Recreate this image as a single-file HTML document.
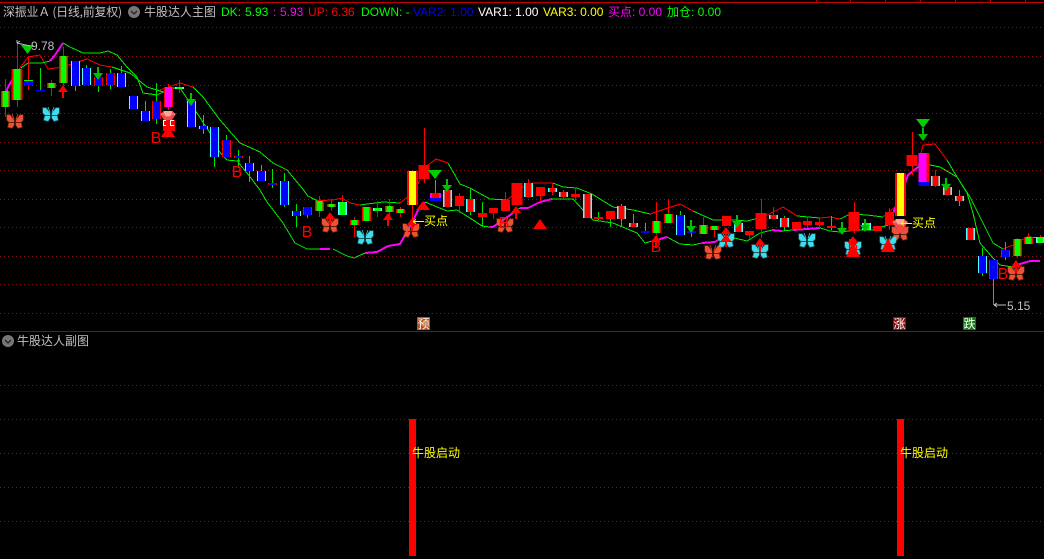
<!DOCTYPE html>
<html><head><meta charset="utf-8"><style>
html,body{margin:0;padding:0;background:#000;width:1044px;height:559px;overflow:hidden}
svg{position:absolute;left:0;top:0}
text{font-family:"Liberation Sans","WenQuanYi Zen Hei","Noto Sans CJK SC",sans-serif;font-size:12px}
.t{font-family:"WenQuanYi Zen Hei","Noto Sans CJK SC",sans-serif}
.c{shape-rendering:crispEdges}
</style></head><body>
<svg width="1044" height="559" viewBox="0 0 1044 559" xmlns="http://www.w3.org/2000/svg">
<defs>
<g id="ra" class="c"><path d="M0 0l5 7h-4v6h-2v-6h-4z" fill="#f00"/></g>
<g id="ga"><path d="M-1 0h2v6h4l-5 7l-5-7h4z" fill="#00c000"/></g>
<g id="bf"><path d="M-1-1L-5-6L-8-6L-8-1L-6 1L-1 1zM1-1L5-6L8-6L8-1L6 1L1 1zM-1 2L-6 2L-7 6L-3 7L-1 4zM1 2L6 2L7 6L3 7L1 4z" stroke-width="1.500" stroke-opacity=".4"/><path d="M-1-2L-3-7M1-2L3-7" stroke-width=".7" fill="none"/></g>
<g id="gem"><path d="M-8-4L-4-7H4L8-4L0 8z" fill="#f04848"/><path d="M-7-4H7M-4-6.500H4L2-2H-2z" fill="#ff9c94" stroke="#ffb0a8" stroke-width=".8"/></g>
</defs>
<g class="c">
<path d="M0 2.500H1044" stroke="#c00000"/>
<path d="M816.500 0V3M850.500 0V3M885.500 0V3M920.500 0V3M955.500 0V3M990.500 0V3M1025.500 0V3" stroke="#c00000"/>
<path d="M0 331.500H1044" stroke="#a00000"/>
<path d="M0 27.500H1044M0 56.500H1044M0 85.500H1044M0 113.500H1044M0 142.500H1044M0 170.500H1044M0 199.500H1044M0 227.500H1044M0 256.500H1044M0 284.500H1044M0 313.500H1044M0 385.500H1044M0 419.500H1044M0 453.500H1044M0 487.500H1044M0 521.500H1044" stroke="#8a1515" stroke-dasharray="1 3"/>
</g>
<g fill="none" stroke-linejoin="round" class="c">
<path d="M17 72L28 57L40 55L48 69L63 67L87 59L100 65L112 67M160 90L180 83L193 87M317 200.700L333 200L342 198L350 203L360 205M400 203L413 193L428 165L436 159L448 163M507 200L523 187L533 183L553 183M650 214L680 204L693 211M763 217L783 207L797 216M820 218L830 217L840 219M883 217L895 207L907 177L918 167L923 145L935 144L947 160M1003 249L1013 245L1027 237" stroke="#f00"/>
<path d="M63 43L70 47L83 53L100 53L108 51L117 55L127 67L137 77L143 93L157 95L163 92M21 68L28 63L42 63L50 61M112 67L130 73L147 87L157 90L163 92M193 87L203 97L220 120L240 143L260 152L273 163L287 170L302 188L308 196L317 200.700M360 205L383 202L400 203M448 163L460 184L470 188L490 199L507 200M553 183L563 187L577 188L592 194L613 207L633 210L650 214M693 211L713 220L733 220L747 221L763 217M797 216L820 218M840 219L850 214L867 215L883 217M947 160L957 177L970 197L983 223L993 243L1003 249M1027 237L1044 238" stroke="#00f000"/>
<path d="M180 88L195 110L210 133L218 150L227 160L237 161L247 173L260 190L267 202L283 223L295 243L307 249L320 249M333 249L347 256L354 258L365 253M425 202L447 211L457 210L470 218L482 226L490 227M513 213L520 208M552 199L573 199L583 210L593 220L613 223L637 233L645 243L660 239M667 237L680 244L693 245L702 243M718 240L730 237L747 241L760 233L772 230M782 231L793 230M820 228L830 231L840 232L857 230L873 230L888 225M918 167L930 165L940 167L957 177L967 193L973 213L980 243L993 258L1000 265L1013 267" stroke="#00f000"/>
<path d="M320 249H330M365 253L377 252L388 246L400 244L412 223L418 210L425 202M490 227L493 227L513 213M520 208L528 208L540 202L552 199M660 239L667 237M702 243L715 242L718 240M772 230L782 231M793 230L820 228M888 225L900 197L908 175L918 167M1013 267L1020 264L1030 261L1040 261M50 61L55 55L63 43M5 96L8 87L17 72M237 161H240M163 92L173 88" stroke="#f0f" stroke-width="2"/>
<path d="M173 88H180" stroke="#00f000"/>
</g>
<g class="c" fill="none">
<path d="M5.500 79V117M17.500 43V107M28.500 57V90M51.500 80V96M63.500 47V97M168.500 84V110M179.500 80V93M319.500 196V217M331.500 199V211M342.500 195V204M354.500 217V237M377.500 201V217M389.500 199V220M400.500 207V217M412.500 205V226M424.500 128V183M459.500 193V213M493.500 208V219M505.500 192V211M528.500 179V198M540.500 196V202M552.500 183V195M563.500 190V198M575.500 189V200M656.500 202V235M668.500 199V223M703.500 217V234M714.500 230V237M749.500 235V238M761.500 199V238M773.500 207V219M807.500 216V228M819.500 218V228M854.500 202V233M889.500 208V230M912.500 132V175M935.500 170V187M1017.500 238V258M1028.500 233V244M1040.500 235V237" stroke="#f00"/>
<path d="M40.500 68V91M75.500 86V91M86.500 65V68M98.500 73V92M110.500 69V89M121.500 66V73M145.500 101V111M156.500 83V124M203.500 115V134M214.500 157V167M226.500 135V140M238.500 150V168M249.500 156V182M261.500 165V171M272.500 169V188M284.500 173V207M296.500 204V227M307.500 215V218M435.500 180V200M470.500 188V215M482.500 202V227M598.500 212V220M610.500 219V227M621.500 204V226M633.500 214V227M645.500 223V233M680.500 211V215M691.500 220V237M784.500 216V231M831.500 216V230M959.500 190V206M982.500 248V276M993.500 279V305M1005.500 242V260" stroke="#00e000"/>
<!-- outer cyan -->
<path d="M75.500 61V86M86.500 68V85M121.500 73V87M133.500 96V109M145.500 111V121M191.500 101V127M203.500 126V129M214.500 127V157M249.500 163V171M261.500 171V181M284.500 181V205M296.500 211V216M680.500 215V235M982.500 256V273M447.500 190V207M470.500 199V212M528.500 183V197M552.500 188V192M563.500 192V197M587.500 194V218M621.500 206V219M633.500 223V227M738.500 223V232M773.500 215V219M784.500 218V227M935.500 176V186M947.500 187V195M959.500 196V201M970.500 228V240M179.500 87V89M342.500 202V215M377.500 208V211M866.500 223V230M1040.500 237V243" stroke="#55ffff" stroke-width="9"/>
<!-- outer red -->
<path d="M5.500 91V107M51.500 83V88M63.500 56V83M319.500 201V211M331.500 204V207M354.500 220V225M366.500 207V221M389.500 206V212M400.500 209V213M656.500 221V233M668.500 214V223M703.500 225V234M714.500 226V230M1017.500 239V256M1028.500 237V244M98.500 77V86M110.500 73V85M156.500 101V119M226.500 140V157M238.500 156V158M272.500 183V185M307.500 207V215M993.500 260V279M1005.500 250V257M168.500 87V107M459.500 196V206M482.500 213V217M493.500 208V213M505.500 200V211M540.500 187V196M575.500 194V197M598.500 217V219M610.500 211V219M726.500 216V226M749.500 231V235M796.500 222V229M807.500 221V225M819.500 222V225M831.500 226V228M877.500 226V231M889.500 212V225" stroke="#f00" stroke-width="9"/>
<path d="M17 69V100M412.500 171V205M900.500 173V216M424 165V179M517 183V205M761 213V229M854 212V231M912 155V166" stroke="#f00" stroke-width="11"/>
<path d="M924 153V186" stroke="#00f" stroke-width="11"/>
<path d="M925 153V182" stroke="#f00" stroke-width="9"/>
<path d="M922.500 153V182" stroke="#f0f" stroke-width="8"/>
<!-- blue -->
<path d="M75.500 61V86M86.500 68V85M121.500 73V87M133.500 96V109M145.500 111V121M191.500 101V127M203.500 126V129M214.500 127V157M249.500 163V171M261.500 171V181M284.500 181V205M296.500 211V216M680.500 215V235M982.500 256V273M98.500 77V86M110.500 73V85M156.500 101V119M226.500 140V157M238.500 156V158M272.500 183V185M307.500 207V215M993.500 260V279M1005.500 250V257" stroke="#0000ff" stroke-width="7"/>
<path d="M28.500 80V85M645.500 231V233M691.500 231V233M40.500 90V91.500" stroke="#0000ff" stroke-width="9"/>
<path d="M28.500 80V81" stroke="#00ff00" stroke-width="9"/>
<!-- green inner -->
<path d="M5.500 91V107M51.500 83V88M63.500 56V83M319.500 201V211M331.500 204V207M354.500 220V225M366.500 207V221M389.500 206V212M400.500 209V213M656.500 221V233M668.500 214V223M703.500 225V234M714.500 226V230M1017.500 239V256M1028.500 237V244M179.500 87V89M342.500 202V215M377.500 208V211M866.500 223V230M1040.500 237V243" stroke="#00ff00" stroke-width="6"/>
<path d="M17 69V100" stroke="#00ff00" stroke-width="7"/>
<!-- red inner (cyan sided) -->
<path d="M447.500 190V207M470.500 199V212M528.500 183V197M552.500 188V192M563.500 192V197M587.500 194V218M621.500 206V219M633.500 223V227M738.500 223V232M773.500 215V219M784.500 218V227M935.500 176V186M947.500 187V195M959.500 196V201M970.500 228V240" stroke="#f00" stroke-width="6"/>
<path d="M168.500 87V107" stroke="#f0f" stroke-width="7"/>
<path d="M412.500 171V205M900.500 173V216" stroke="#ffff00" stroke-width="7"/>
<path d="M435.500 193V201" stroke="#f0f" stroke-width="11"/>
<path d="M435.500 198V201" stroke="#00f" stroke-width="11"/>
<path d="M435.500 193V198" stroke="#f00" stroke-width="7"/>
</g>
<!-- butterflies -->
<g fill="#ee5030" stroke="#ee5030">
<use href="#bf" x="15" y="121"/><use href="#bf" x="330" y="225"/><use href="#bf" x="411" y="230"/><use href="#bf" x="505" y="225"/><use href="#bf" x="713" y="252"/><use href="#bf" x="900" y="233"/><use href="#bf" x="1016" y="273"/>
</g>
<g fill="#3fdcec" stroke="#3fdcec">
<use href="#bf" x="51" y="114"/><use href="#bf" x="365" y="237"/><use href="#bf" x="726" y="240"/><use href="#bf" x="760" y="251"/><use href="#bf" x="807" y="240"/><use href="#bf" x="853" y="248"/><use href="#bf" x="888" y="243"/>
</g>
<!-- gems -->
<use href="#gem" x="168" y="118"/><use href="#gem" x="900" y="226"/>
<g class="c"><path d="M163 120h12v11h-12z" fill="#f00"/><path d="M163 120h3v1h-3zM163 121h1v5h-1zM163 125h3v1h-3zM170 120h4v1h-4zM170 121h1v5h-1zM170 125h4v1h-4z" fill="#fff"/></g>
<!-- triangles -->
<g fill="#f00">
<path d="M168 126L175 137H161z"/><path d="M423 201L430 210H416z"/><path d="M540 219L547 229H533z"/><path d="M888 238L895 252H881z"/><path d="M853 242L860 257H846z"/>
</g>
<g fill="#00d000">
<path d="M21 45H34L27.500 54z"/><path d="M428 170H442L435 179z"/><path d="M916 119H930L923 128z"/>
</g>
<!-- arrows -->
<use href="#ra" x="63" y="85"/><use href="#ra" x="330" y="212"/><use href="#ra" x="388" y="213"/><use href="#ra" x="412" y="218"/><use href="#ra" x="516" y="206"/><use href="#ra" x="656" y="235"/><use href="#ra" x="726" y="227"/><use href="#ra" x="726" y="234"/><use href="#ra" x="760" y="238"/><use href="#ra" x="853" y="236"/><use href="#ra" x="1016" y="260"/>
<use href="#ga" x="98" y="67"/><use href="#ga" x="191" y="93"/><use href="#ga" x="447" y="179"/><use href="#ga" x="691" y="220"/><use href="#ga" x="737" y="215"/><use href="#ga" x="842" y="222"/><use href="#ga" x="865" y="219"/><use href="#ga" x="923" y="128"/><use href="#ga" x="946" y="178"/>
<!-- B labels -->
<g fill="#f00" style="font-size:16px" text-anchor="middle">
<text x="156" y="143" style="font-size:16px">B</text><text x="237" y="177" style="font-size:16px">B</text><text x="307" y="237" style="font-size:16px">B</text><text x="504" y="228" style="font-size:16px">B</text><text x="656" y="252" style="font-size:16px">B</text><text x="853" y="250" style="font-size:16px">B</text><text x="1003" y="279" style="font-size:16px">B</text>
</g>
<!-- price labels -->
<path d="M17 43l13 3M17 43l3-2M17 43v-3M994 305h12M994 305l3-2M994 305l3 2" stroke="#c0c0c0" fill="none"/>
<text x="31" y="50" fill="#c0c0c0">9.78</text>
<text x="1007" y="310" fill="#c0c0c0">5.15</text>
<!-- buy points -->
<path d="M413 221.500h11M413 221.500l3-2M413 221.500l3 2M901 223.500h11M901 223.500l3-2M901 223.500l3 2" stroke="#ffff00" fill="none"/>
<text class="t" x="424" y="225" fill="#ffff00">买点</text>
<text class="t" x="912" y="227" fill="#ffff00">买点</text>
<!-- tags -->
<g class="c"><rect x="417" y="317" width="13" height="13" fill="#b5521a"/><rect x="893" y="317" width="13" height="13" fill="#8b1010"/><rect x="963" y="317" width="13" height="13" fill="#0f7a0f"/></g>
<g fill="#fff" text-anchor="middle"><text class="t" x="423.500" y="328">预</text><text class="t" x="899.500" y="328">涨</text><text class="t" x="969.500" y="328">跌</text></g>
<!-- sub chart -->
<g class="c"><rect x="409" y="419" width="7" height="137" fill="#f00"/><rect x="897" y="419" width="7" height="137" fill="#f00"/></g>
<text class="t" x="412" y="457" fill="#ffff00">牛股启动</text>
<text class="t" x="900" y="457" fill="#ffff00">牛股启动</text>
<!-- header -->
<text class="t" x="3" y="16" fill="#c0c0c0" textLength="119">深振业Ａ (日线,前复权)</text>
<circle cx="134" cy="12" r="6" fill="#777"/><path d="M131 11l3 3l3-3" stroke="#222" stroke-width="1.300" fill="none"/>
<text class="t" x="144" y="16" fill="#c0c0c0">牛股达人主图</text>
<text x="221" y="16" fill="#00ff00">DK:</text><text x="245" y="16" fill="#00ff00">5.93</text>
<text x="273" y="16" fill="#ff00ff">:</text><text x="280" y="16" fill="#ff00ff">5.93</text>
<text x="308" y="16" fill="#ff0000">UP: 6.36</text>
<text x="361" y="16" fill="#00ff00">DOWN: -</text>
<text x="413" y="16" fill="#0000ff">VAR2: 1.00</text>
<text x="478" y="16" fill="#ffffff">VAR1: 1.00</text>
<text x="543" y="16" fill="#ffff00">VAR3: 0.00</text>
<text x="608" y="16" fill="#ff00ff">买点: 0.00</text>
<text x="667" y="16" fill="#00ff00">加仓: 0.00</text>
<circle cx="8" cy="341" r="6" fill="#777"/><path d="M5 340l3 3l3-3" stroke="#222" stroke-width="1.300" fill="none"/>
<text class="t" x="17" y="345" fill="#c0c0c0">牛股达人副图</text>
</svg>
</body></html>
